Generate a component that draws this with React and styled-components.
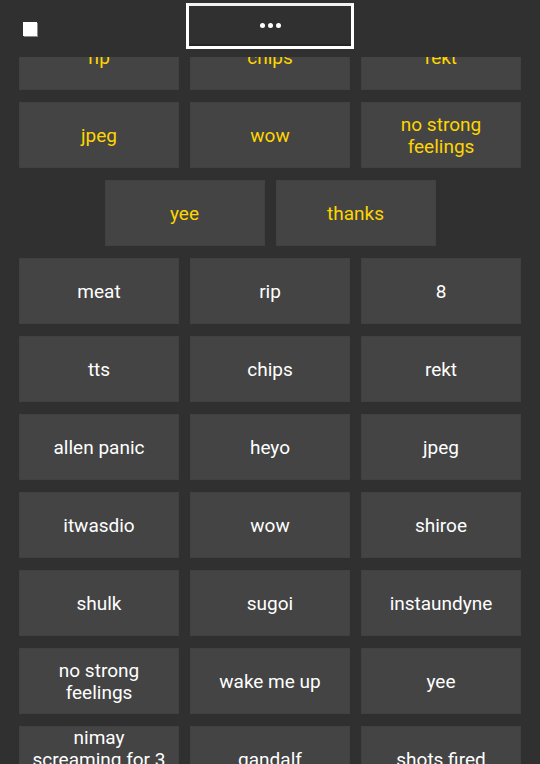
import React from 'react'
import styled, { createGlobalStyle } from 'styled-components'

const Global = createGlobalStyle`
  html, body {
    margin: 0;
    padding: 0;
    background: #303030;
    overflow: hidden;
    font-family: Roboto, "Liberation Sans", sans-serif;
  }
`
const Page = styled.div`
  width: 540px;
  height: 764px;
  overflow: hidden;
  background: #303030;
  display: flex;
  flex-direction: column;
  gap: 12px;
  padding-top: 24px;
  box-sizing: border-box;
`
const Header = styled.header`
  position: fixed;
  top: 0;
  left: 0;
  right: 0;
  height: 57px;
  background: #303030;
  z-index: 2;
`
const Square = styled.div`
  position: absolute;
  left: 23px;
  top: 22px;
  width: 14px;
  height: 14px;
  background: #fff;
  box-shadow: 1px 1px 0 #8a8a8a;
`
const MenuBtn = styled.button`
  position: absolute;
  left: 186px;
  top: 3px;
  width: 168px;
  height: 46px;
  box-sizing: border-box;
  border: 3px solid #fff;
  border-top-color: #f2f2f2;
  background: #303030;
  display: flex;
  align-items: center;
  justify-content: center;
  gap: 3px;
  padding: 0 0 2px;
  box-shadow: inset 0 -2px 0 #262626;
`
const Dot = styled.span`
  width: 5px;
  height: 5px;
  border-radius: 50%;
  background: #fff;
`
const Grid = styled.div`
  display: flex;
  flex-wrap: wrap;
  justify-content: center;
  column-gap: 11px;
  row-gap: 12px;
  flex-shrink: 0;
`
const Tile = styled.div`
  width: 160px;
  height: 66px;
  box-sizing: border-box;
  background: #444444;
  border: 1px solid #414141;
  display: flex;
  align-items: center;
  justify-content: center;
  text-align: center;
  padding: 2px 8px 0;
  font-size: 19px;
  line-height: 22px;
  color: ${p => (p.$fav ? '#ffd500' : '#ffffff')};
`

const favs = ['rip', 'chips', 'rekt', 'jpeg', 'wow', 'no strong feelings', 'yee', 'thanks']
const sounds = [
  'meat', 'rip', '8',
  'tts', 'chips', 'rekt',
  'allen panic', 'heyo', 'jpeg',
  'itwasdio', 'wow', 'shiroe',
  'shulk', 'sugoi', 'instaundyne',
  'no strong feelings', 'wake me up', 'yee',
  'nimay screaming for 3 seconds', 'gandalf', 'shots fired',
]

export default function App() {
  return (
    <Page>
      <Global />
      <Header>
        <Square />
        <MenuBtn>
          <Dot /><Dot /><Dot />
        </MenuBtn>
      </Header>
      <Grid>
        {favs.map((s, i) => <Tile key={'f' + i} $fav>{s}</Tile>)}
      </Grid>
      <Grid>
        {sounds.map((s, i) => <Tile key={'s' + i}>{s}</Tile>)}
      </Grid>
    </Page>
  )
}
